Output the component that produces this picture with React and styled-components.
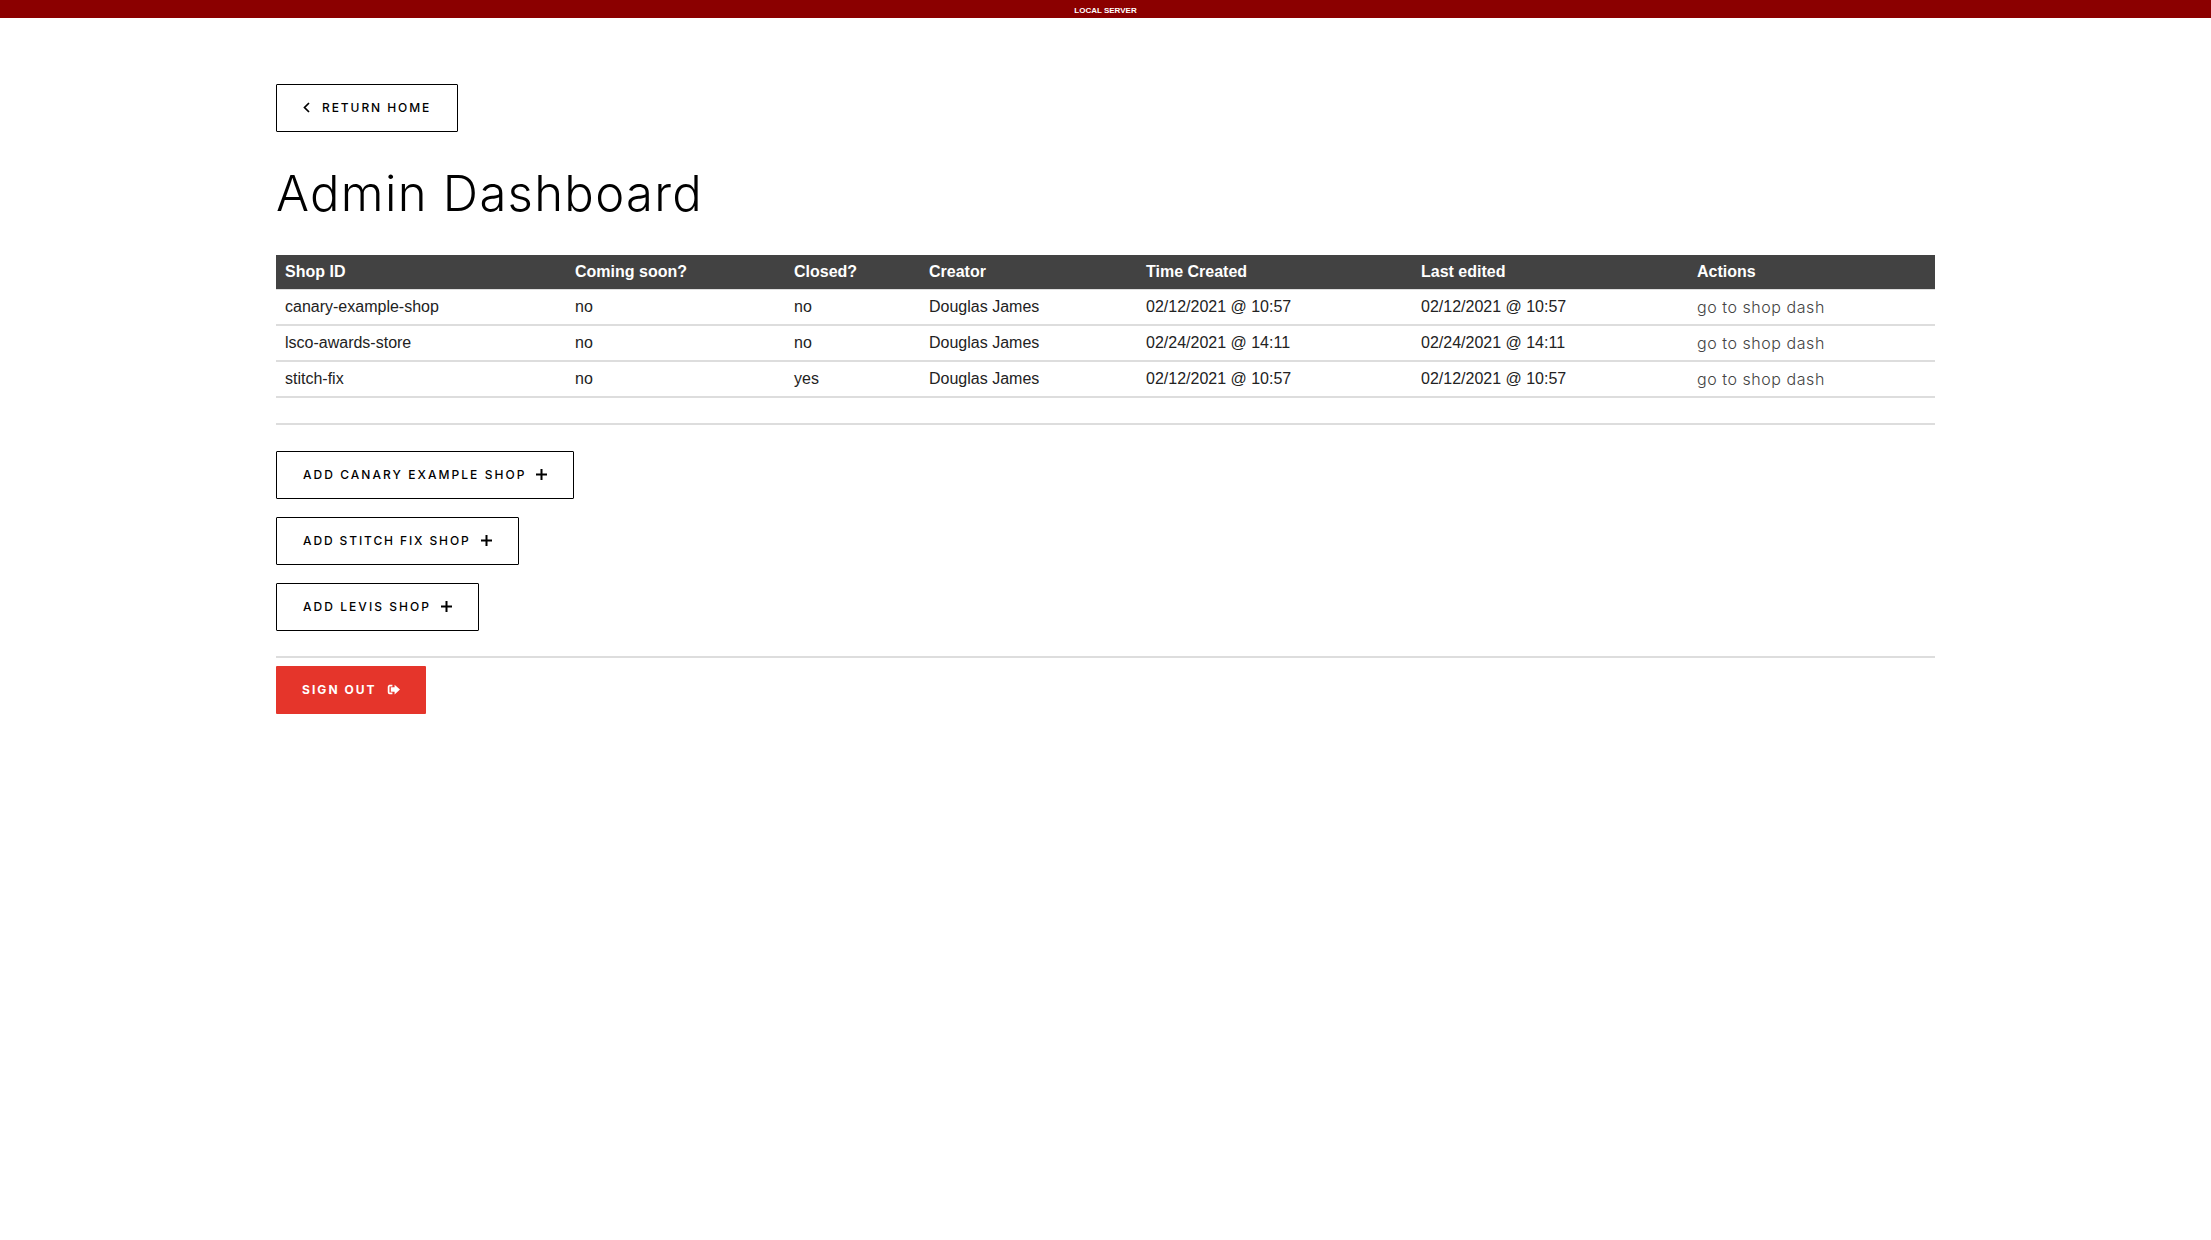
import React from 'react';
import styled, { createGlobalStyle } from 'styled-components';

const GlobalStyle = createGlobalStyle`
  html, body {
    margin: 0;
    padding: 0;
    background: #fff;
    color: #000;
    font-family: "Liberation Sans", Arial, sans-serif;
  }
`;

const ServerBar = styled.div`
  height: 18px;
  background: #8b0000;
  color: #fff;
  font-size: 8px;
  font-weight: 700;
  line-height: 21px;
  text-align: center;
  text-transform: uppercase;
`;

const Page = styled.main`
  padding: 66px 276px 0;
`;

const ActionButton = styled.a`
  box-sizing: border-box;
  display: flex;
  width: fit-content;
  height: 48px;
  align-items: center;
  gap: ${(p) => p.$gap || 10}px;
  padding: 0 26px 1px;
  border: ${(p) => (p.$danger ? 'none' : '1px solid #000')};
  border-radius: 1px;
  background: ${(p) => (p.$danger ? '#e5352b' : '#fff')};
  color: ${(p) => (p.$danger ? '#fff' : '#000')};
  font-family: Inter, sans-serif;
  font-size: 12px;
  font-weight: ${(p) => (p.$danger ? 700 : 500)};
  letter-spacing: ${(p) => p.$tracking || 2.05}px;
  text-transform: uppercase;
  cursor: pointer;
  svg {
    flex: none;
  }
`;

const Heading = styled.h1`
  margin: 35px 0 34px;
  font-family: Inter, sans-serif;
  font-size: 49px;
  font-weight: 300;
  line-height: 54px;
  letter-spacing: 1.3px;
`;

const Table = styled.table`
  width: 100%;
  table-layout: fixed;
  border-collapse: separate;
  border-spacing: 0;
  font-size: 16px;
`;

const Th = styled.th`
  box-sizing: border-box;
  height: 35px;
  padding: 0 8px;
  border-bottom: 1px solid #ddd;
  background: #424242;
  color: #fff;
  font-weight: 700;
  text-align: left;
  &:first-child {
    padding-left: 9px;
  }
`;

const Td = styled.td`
  box-sizing: border-box;
  height: 36px;
  padding: 0 8px;
  border-bottom: 2px solid #ddd;
  color: #222;
  &:first-child {
    padding-left: 9px;
  }
`;

const DashLink = styled.a`
  color: #444;
  font-family: Inter, sans-serif;
  font-size: 16px;
  font-weight: 300;
  letter-spacing: 0.55px;
  cursor: pointer;
`;

const Divider = styled.hr`
  height: 2px;
  margin: ${(p) => p.$margin};
  border: 0;
  background: #ddd;
`;

const ButtonStack = styled.div`
  display: flex;
  flex-direction: column;
  gap: 18px;
`;

const ChevronIcon = () => (
  <svg width="7" height="11" viewBox="0 0 7 11" fill="none" stroke="currentColor" strokeWidth="1.7">
    <path d="M6 1 1.5 5.5 6 10" />
  </svg>
);

const PlusIcon = () => (
  <svg width="11" height="11" viewBox="0 0 11 11" fill="none" stroke="currentColor" strokeWidth="2">
    <path d="M5.5 0v11M0 5.5h11" />
  </svg>
);

const SignOutIcon = () => (
  <svg width="13" height="11" viewBox="0 0 12 10">
    <path d="M5 1.500H2.500a1 1 0 0 0-1 1v5a1 1 0 0 0 1 1H5" fill="none" stroke="currentColor" strokeWidth="1.6" />
    <path d="M7 .5 12 5 7 9.500V7H3.500V3H7z" fill="currentColor" />
  </svg>
);

const columns = [
  { label: 'Shop ID', width: 291 },
  { label: 'Coming soon?', width: 219 },
  { label: 'Closed?', width: 135 },
  { label: 'Creator', width: 217 },
  { label: 'Time Created', width: 275 },
  { label: 'Last edited', width: 276 },
  { label: 'Actions', width: 246 },
];

const shops = [
  { id: 'canary-example-shop', soon: 'no', closed: 'no', created: '02/12/2021 @ 10:57' },
  { id: 'lsco-awards-store', soon: 'no', closed: 'no', created: '02/24/2021 @ 14:11' },
  { id: 'stitch-fix', soon: 'no', closed: 'yes', created: '02/12/2021 @ 10:57' },
];

const addButtons = [
  { label: 'Add canary example shop' },
  { label: 'Add stitch fix shop', tracking: 1.88 },
  { label: 'Add levis shop' },
];

export default function App() {
  return (
    <>
      <GlobalStyle />
      <ServerBar>Local server</ServerBar>
      <Page>
        <ActionButton $gap={12} $tracking={1.92}>
          <ChevronIcon />
          Return home
        </ActionButton>
        <Heading>Admin Dashboard</Heading>
        <Table>
          <colgroup>
            {columns.map((c) => (
              <col key={c.label} width={c.width} />
            ))}
          </colgroup>
          <thead>
            <tr>
              {columns.map((c) => (
                <Th key={c.label}>{c.label}</Th>
              ))}
            </tr>
          </thead>
          <tbody>
            {shops.map((s) => (
              <tr key={s.id}>
                <Td>{s.id}</Td>
                <Td>{s.soon}</Td>
                <Td>{s.closed}</Td>
                <Td>Douglas James</Td>
                <Td>{s.created}</Td>
                <Td>{s.created}</Td>
                <Td>
                  <DashLink>go to shop dash</DashLink>
                </Td>
              </tr>
            ))}
          </tbody>
        </Table>
        <Divider $margin="25px 0 26px" />
        <ButtonStack>
          {addButtons.map((b) => (
            <ActionButton key={b.label} $tracking={b.tracking}>
              {b.label}
              <PlusIcon />
            </ActionButton>
          ))}
        </ButtonStack>
        <Divider $margin="25px 0 8px" />
        <ActionButton $danger>
          Sign out
          <SignOutIcon />
        </ActionButton>
      </Page>
    </>
  );
}
